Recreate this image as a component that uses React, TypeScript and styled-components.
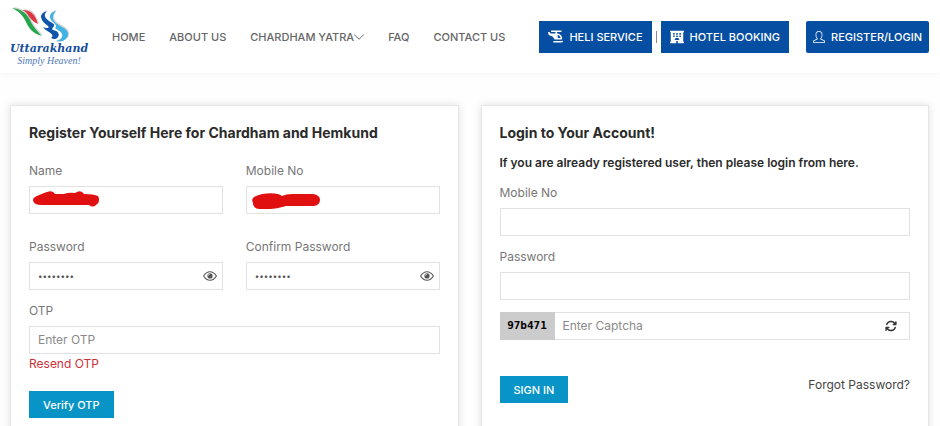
import React from "react";
import styled, { createGlobalStyle } from "styled-components";
import { FaHelicopter, FaHotel } from "react-icons/fa";
import { FaArrowsRotate } from "react-icons/fa6";
import { SlArrowDown, SlUser } from "react-icons/sl";

const GlobalStyle = createGlobalStyle`
  * { box-sizing: border-box; }
  body {
    margin: 0;
    background: #fefefe;
    color: #777;
    font: 400 12px/18px Inter, "Open Sans", sans-serif;
  }
  button, input { font: inherit; }
`;

const Page = styled.div`
  min-height: 100vh;
  overflow: hidden;
`;

const Header = styled.header`
  display: flex;
  align-items: center;
  height: 73px;
  padding: 0 11px;
  background: #fff;
  box-shadow: 0 1px 8px rgba(0, 0, 0, 0.04);
`;

const Brand = styled.a`
  display: flex;
  flex: none;
  flex-direction: column;
  align-items: center;
  width: 76px;
  margin-right: 25px;
  text-decoration: none;
  white-space: nowrap;
`;

const BrandMark = styled.svg`
  display: block;
  align-self: flex-start;
  width: 60px;
  height: 36px;
`;

const BrandName = styled.span`
  color: #164f9e;
  font: italic 700 11px/12px "DejaVu Serif", "Liberation Serif", serif;
`;

const BrandTagline = styled.span`
  color: #4d79b8;
  font: italic 400 10px/12px "Liberation Serif", serif;
`;

const Nav = styled.nav`
  display: flex;
  gap: 24px;
`;

const NavLink = styled.a`
  display: flex;
  align-items: center;
  color: #666;
  font-size: 11px;
  font-weight: 500;
  text-decoration: none;
  white-space: nowrap;
`;

const Actions = styled.div`
  display: flex;
  align-items: center;
  margin-left: auto;
`;

const ActionLink = styled.a<{ $rounded?: boolean }>`
  display: flex;
  align-items: center;
  justify-content: center;
  gap: 6px;
  height: 32px;
  padding: 0 ${(p) => (p.$rounded ? "7px" : "9px")};
  border-radius: ${(p) => (p.$rounded ? "2px" : "0")};
  margin-left: ${(p) => (p.$rounded ? "17px" : "0")};
  background: #064ea2;
  color: #fff;
  font-size: 11px;
  font-weight: 500;
  text-decoration: none;
  white-space: nowrap;
  svg { flex: none; }
`;

const Divider = styled.span`
  width: 1px;
  height: 12px;
  margin: 0 4px;
  background: #888;
`;

const Main = styled.main`
  display: grid;
  grid-template-columns: repeat(2, minmax(0, 1fr));
  gap: 22px;
  padding: 32px 11px 0 10px;
`;

const Card = styled.form`
  min-height: 340px;
  padding: 17px 18px;
  border: 1px solid #e6e6e8;
  background: #fff;
  box-shadow: 0 0 8px rgba(0, 0, 0, 0.12);
`;

const Title = styled.h2`
  margin: 0;
  color: #2b2b2b;
  font-size: 14px;
  font-weight: 700;
  line-height: 20px;
  white-space: nowrap;
`;

const Subtitle = styled.p`
  margin: 11px 0 12px;
  color: #2b2b2b;
  font-size: 12px;
  font-weight: 600;
  white-space: nowrap;
`;

const FieldGrid = styled.div`
  display: grid;
  grid-template-columns: repeat(2, minmax(0, 1fr));
  gap: 24px 23px;
  margin: 19px 0 12px;
`;

const Field = styled.div`
  display: flex;
  flex-direction: column;
  gap: 6px;
`;

const FieldStack = styled.div`
  display: grid;
  gap: 12px;
`;

const Label = styled.label`
  color: #777;
`;

const Control = styled.div`
  position: relative;
  display: flex;
  height: 28px;
  border: 1px solid #e2e2e2;
  background: #fff;
`;

const Input = styled.input`
  flex: 1;
  min-width: 0;
  padding: 0 8px;
  border: 0;
  outline: 0;
  background: transparent;
  color: #555;
  &::placeholder { color: #8a8a8a; opacity: 1; }
  &[type="password"] { font-size: 8px; }
`;

const IconButton = styled.button`
  display: flex;
  align-items: center;
  justify-content: center;
  flex: none;
  width: 24px;
  padding: 0;
  border: 0;
  background: transparent;
  color: #555;
`;

const RefreshButton = styled(IconButton)`
  width: 37px;
  color: #333;
`;

const Scribble = styled.svg`
  position: absolute;
  top: 3px;
  left: 3px;
  width: 72px;
  height: 20px;
  pointer-events: none;
`;

const Captcha = styled.span`
  display: flex;
  align-items: center;
  justify-content: center;
  width: 55px;
  margin: -1px 0 -1px -1px;
  background: #ccc;
  color: #000;
  font: 700 11px/18px "DejaVu Sans Mono", monospace;
`;

const ResendLink = styled.a`
  display: block;
  width: max-content;
  margin: 1px 0 18px;
  color: #cf3038;
  text-decoration: none;
`;

const Submit = styled.button`
  height: 27px;
  padding: 0 14px;
  border: 0;
  background: #0894c6;
  color: #fff;
  font-size: 11px;
  font-weight: 500;
  white-space: nowrap;
`;

const FormFooter = styled.div`
  display: flex;
  align-items: flex-start;
  justify-content: space-between;
  margin-top: 36px;
`;

const ForgotLink = styled.a`
  color: #444;
  text-decoration: none;
`;

function EyeIcon() {
  return (
    <svg width="14" height="10" viewBox="0 0 14 10" fill="none" aria-hidden="true">
      <path d="M.6 5Q3.200.7 7 .7T13.400 5Q10.800 9.300 7 9.300T.6 5Z" stroke="currentColor" strokeWidth="1.100" />
      <circle cx="7" cy="4.900" r="2.600" fill="currentColor" />
      <path d="M5.400 4.600Q5.500 3.200 6.900 3.100" stroke="#fff" strokeWidth=".8" />
    </svg>
  );
}

function PasswordField({ id, label }: { id: string; label: string }) {
  return (
    <Field>
      <Label htmlFor={id}>{label}</Label>
      <Control>
        <Input id={id} type="password" defaultValue="abcdefgh" />
        <IconButton type="button" aria-label={`Show ${label.toLowerCase()}`}>
          <EyeIcon />
        </IconButton>
      </Control>
    </Field>
  );
}

const leafPath = "M11 8C21 9 26 14 29 20C32 27 36 31 41 36C33 34 28 29 25 22C22 16 19 12 11 8Z";
const emberPath = "M21 10C31 10 34 15 37 24C32 22 29 18 27 15C26 13 24 11 21 10Z";
const riverPath = "M46 11C42 15 44 18 48 21C51 23 54 24 53 26C52 28 50 29 52 30C57 31 59 34 57 37C55 40 52 39 50 38C53 36 51 34 48 32C45 30 43 29 42 27C46 29 49 28 47 26C43 23 40 20 40 16C41 13 43 12 46 11Z";
const skyPath = "M55 11C51 15 51 19 54 22C57 26 65 27 67 33C68 39 61 43 55 41C60 40 62 37 61 34C60 31 56 30 54 28C57 26 53 23 51 21C47 17 49 12 55 11Z";

function Logo() {
  return (
    <Brand href="#">
      <BrandMark viewBox="10 7 60 36" aria-hidden="true">
        <g fill="#aaa" opacity=".5" transform="translate(1 -1)">
          <path d={leafPath} />
          <path d={emberPath} />
          <path d={skyPath} />
        </g>
        <path fill="#25a64b" d={leafPath} />
        <path fill="#df3543" d={emberPath} />
        <path fill="#0e55aa" d={riverPath} />
        <path fill="#40b3e4" d={skyPath} />
      </BrandMark>
      <BrandName>Uttarakhand</BrandName>
      <BrandTagline>Simply Heaven!</BrandTagline>
    </Brand>
  );
}

export default function App() {
  return (
    <Page>
      <GlobalStyle />
      <Header>
        <Logo />
        <Nav>
          <NavLink href="#">HOME</NavLink>
          <NavLink href="#">ABOUT US</NavLink>
          <NavLink href="#">CHARDHAM YATRA<SlArrowDown size={10} /></NavLink>
          <NavLink href="#">FAQ</NavLink>
          <NavLink href="#">CONTACT US</NavLink>
        </Nav>
        <Actions>
          <ActionLink href="#"><FaHelicopter size={15} />HELI SERVICE</ActionLink>
          <Divider />
          <ActionLink href="#"><FaHotel size={14} />HOTEL BOOKING</ActionLink>
          <ActionLink href="#" $rounded><SlUser size={12} />REGISTER/LOGIN</ActionLink>
        </Actions>
      </Header>
      <Main>
        <Card>
          <Title>Register Yourself Here for Chardham and Hemkund</Title>
          <FieldGrid>
            <Field>
              <Label htmlFor="name">Name</Label>
              <Control>
                <Input id="name" type="text" />
                <Scribble viewBox="0 0 72 20" aria-hidden="true">
                  <path fill="#e01010" d="M2 7C6 5 10 3 14 2Q20 0 22 4L31 4Q36 2 42 3Q48-1 51 4Q61 4 65 6Q68 12 63 15Q60 18 56 15L9 15Q0 15 0 10Q0 8 2 7Z" />
                </Scribble>
              </Control>
            </Field>
            <Field>
              <Label htmlFor="mobile">Mobile No</Label>
              <Control>
                <Input id="mobile" type="tel" />
                <Scribble viewBox="0 0 72 20" aria-hidden="true">
                  <path fill="#e01010" d="M4 7Q8 5 12 4Q27 2 32 6Q36 4 42 4L63 4Q70 5 70 10Q70 15 64 16L36 16Q26 19 20 19L9 19Q3 18 3 13Q1 9 4 7Z" />
                </Scribble>
              </Control>
            </Field>
            <PasswordField id="password" label="Password" />
            <PasswordField id="confirm" label="Confirm Password" />
          </FieldGrid>
          <Field>
            <Label htmlFor="otp">OTP</Label>
            <Control>
              <Input id="otp" type="text" placeholder="Enter OTP" />
            </Control>
          </Field>
          <ResendLink href="#">Resend OTP</ResendLink>
          <Submit type="button">Verify OTP</Submit>
        </Card>
        <Card>
          <Title>Login to Your Account!</Title>
          <Subtitle>If you are already registered user, then please login from here.</Subtitle>
          <FieldStack>
            <Field>
              <Label htmlFor="login-mobile">Mobile No</Label>
              <Control>
                <Input id="login-mobile" type="tel" />
              </Control>
            </Field>
            <Field>
              <Label htmlFor="login-password">Password</Label>
              <Control>
                <Input id="login-password" type="password" />
              </Control>
            </Field>
            <Control>
              <Captcha>97b471</Captcha>
              <Input type="text" placeholder="Enter Captcha" aria-label="Enter Captcha" />
              <RefreshButton type="button" aria-label="Refresh captcha">
                <FaArrowsRotate size={12} />
              </RefreshButton>
            </Control>
          </FieldStack>
          <FormFooter>
            <Submit type="button">SIGN IN</Submit>
            <ForgotLink href="#">Forgot Password?</ForgotLink>
          </FormFooter>
        </Card>
      </Main>
    </Page>
  );
}
